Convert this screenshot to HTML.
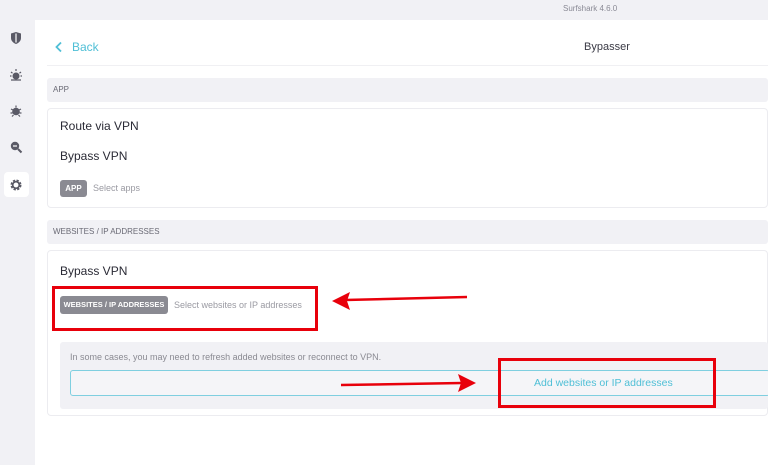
<!DOCTYPE html>
<html><head><style>
*{margin:0;padding:0;box-sizing:border-box}
body{width:768px;height:465px;overflow:hidden;background:#f1f1f5;font-family:"Liberation Sans",sans-serif;position:relative;color:#2a2a35}
.a{position:absolute}
.main{left:35px;top:20px;width:733px;height:445px;background:#fff}
.hdr{left:47px;width:721px;background:#f1f1f5;border-radius:3px;font-size:8px;color:#6a6a75;padding-left:6px}
.card{left:47px;width:721px;background:#fff;border:1px solid #ececf0;border-radius:4px}
.t{font-size:12px;color:#2a2a35}
.badge{background:#8a8a92;color:#fff;font-size:8px;font-weight:bold;border-radius:3px;text-align:center}
.sub{font-size:9px;color:#9a9aa2}
.red{border:3px solid #e8000b}
</style></head><body>
<div class="a" style="left:563px;top:4px;font-size:8px;color:#8a8a95">Surfshark 4.6.0</div>
<svg class="a" style="left:9px;top:31px" width="14" height="14" viewBox="0 0 14 14"><path d="M2 2.5L7 1l5 1.5v4.5c0 3-2.5 5-5 6-2.5-1-5-3-5-6z" fill="#5a5a66"/><path d="M7 2.5v9" stroke="#fff" stroke-width="1.2"/></svg>
<svg class="a" style="left:9px;top:68px" width="14" height="14" viewBox="0 0 14 14"><circle cx="7" cy="8" r="3.5" fill="#5a5a66"/><path d="M7 1v2M2 4l1.5 1.2M12 4l-1.5 1.2M1 8h1.5M11.5 8H13M2 12h10" stroke="#5a5a66" stroke-width="1.2"/></svg>
<svg class="a" style="left:9px;top:104px" width="14" height="14" viewBox="0 0 14 14"><circle cx="7" cy="7.5" r="3.8" fill="#5a5a66"/><path d="M7 1.5v2M2 5l2 1M12 5l-2 1M1.5 9h2M10.5 9h2M3 12.5l1.5-1.5M11 12.5L9.5 11" stroke="#5a5a66" stroke-width="1.2"/></svg>
<svg class="a" style="left:9px;top:140px" width="14" height="14" viewBox="0 0 14 14"><circle cx="6" cy="6" r="4.2" fill="#5a5a66"/><path d="M9 9l3.5 3.5" stroke="#5a5a66" stroke-width="2"/><path d="M4 6h4" stroke="#fff" stroke-width="1.2"/></svg>
<div class="a" style="left:4px;top:172px;width:25px;height:25px;background:#fff;border-radius:4px"></div>
<svg class="a" style="left:9px;top:178px" width="14" height="14" viewBox="0 0 14 14"><circle cx="7" cy="7" r="4" fill="none" stroke="#5a5a66" stroke-width="3" stroke-dasharray="2 1.2"/><circle cx="7" cy="7" r="3.3" fill="none" stroke="#5a5a66" stroke-width="1.6"/></svg>
<div class="a main"></div>
<svg class="a" style="left:54px;top:41px" width="10" height="12" viewBox="0 0 10 12"><path d="M7 1.5L2.5 6 7 10.5" fill="none" stroke="#4fbfd6" stroke-width="1.8"/></svg>
<div class="a" style="left:72px;top:40px;font-size:12px;color:#4fbfd6">Back</div>
<div class="a" style="left:584px;top:41px;font-size:11px;color:#3a3a45">Bypasser</div>
<div class="a" style="left:47px;top:65px;width:721px;height:1px;background:#f0f0f3"></div>
<div class="a hdr" style="top:78px;height:24px;line-height:24px">APP</div>
<div class="a card" style="top:108px;height:100px"></div>
<div class="a t" style="left:60px;top:119px">Route via VPN</div>
<div class="a t" style="left:60px;top:149px">Bypass VPN</div>
<div class="a badge" style="left:60px;top:180px;width:27px;height:17px;line-height:17px">APP</div>
<div class="a sub" style="left:93px;top:183px">Select apps</div>
<div class="a hdr" style="top:220px;height:24px;line-height:24px">WEBSITES / IP ADDRESSES</div>
<div class="a card" style="top:250px;height:166px"></div>
<div class="a t" style="left:60px;top:264px">Bypass VPN</div>
<div class="a badge" style="left:60px;top:296px;width:108px;height:18px;line-height:18px;font-size:7.5px">WEBSITES / IP ADDRESSES</div>
<div class="a sub" style="left:174px;top:300px">Select websites or IP addresses</div>
<div class="a red" style="left:52px;top:286px;width:266px;height:45px"></div>
<div class="a" style="left:60px;top:342px;width:708px;height:67px;background:#f1f1f5;border-radius:3px"></div>
<div class="a sub" style="left:70px;top:352px;color:#8a8a92">In some cases, you may need to refresh added websites or reconnect to VPN.</div>
<div class="a" style="left:70px;top:370px;width:700px;height:26px;border:1px solid #7fcfe0;border-radius:3px;background:#f5f5f8"></div>
<div class="a" style="left:534px;top:377px;font-size:10.5px;color:#4fbfd6">Add websites or IP addresses</div>
<div class="a red" style="left:498px;top:358px;width:218px;height:50px"></div>
<svg class="a" style="left:0;top:0" width="768" height="465"><path d="M467 297L345 300" stroke="#e8000b" stroke-width="2.5"/><path d="M332 301l18-9-3 9 3 9z" fill="#e8000b"/><path d="M341 385L462 383" stroke="#e8000b" stroke-width="2.5"/><path d="M476 383l-18-9 3 9-3 9z" fill="#e8000b"/></svg>
</body></html>
